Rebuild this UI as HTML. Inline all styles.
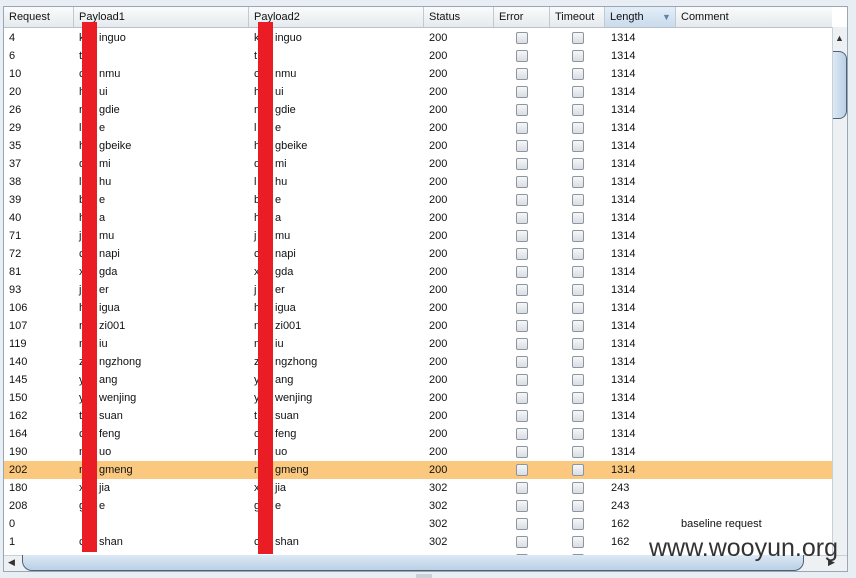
<!DOCTYPE html>
<html><head><style>
body{margin:0;width:856px;height:578px;overflow:hidden;background:#e9eef4;font-family:"Liberation Sans",Arial,sans-serif;font-size:11px;color:#111;position:relative}
.t{position:absolute;left:3px;top:6px;width:845px;height:566px;background:#fff;border:1px solid #9aa6b4;box-sizing:border-box;overflow:hidden}
.hd{position:absolute;left:0;top:0;width:828px;height:20px;background:linear-gradient(#fafbfc,#e6eaee);border-bottom:1px solid #b9c2cc}
.hd div{position:absolute;top:0;height:20px;line-height:20px;padding-left:5px;border-right:1px solid #c2c9d1;box-sizing:border-box}
.r{position:absolute;left:0;width:828px;height:18px;line-height:18px}
.r span{position:absolute;top:0}
.cb{position:absolute;top:3px;width:10px;height:10px;border:1px solid #8d96a0;border-radius:2px;background:linear-gradient(#f6f7f8,#d9dde2)}
.red{position:absolute;background:#ea1c24}
</style></head><body>
<div class="t">
<div class="hd">
<div style="left:0;width:70px">Request</div>
<div style="left:70px;width:175px">Payload1</div>
<div style="left:245px;width:175px">Payload2</div>
<div style="left:420px;width:70px">Status</div>
<div style="left:490px;width:56px">Error</div>
<div style="left:546px;width:55px">Timeout</div>
<div style="left:601px;width:71px;background:linear-gradient(#e4eef8,#c9dbec)">Length<span style="position:absolute;left:57px;color:#5b84ad;font-size:9px">▼</span></div>
<div style="left:672px;width:156px;border-right:none">Comment</div>
</div>
<div id="rows"></div>
<div style="position:absolute;left:828px;top:20px;width:16px;height:532px;background:#eef1f4;border-left:1px solid #c8cfd6"></div>
<div style="position:absolute;left:831px;top:26px;font-size:9px;color:#333">▲</div>
<div style="position:absolute;left:829px;top:44px;width:13px;height:66px;border:1px solid #4f6173;border-left:none;border-radius:0 8px 8px 0;background:linear-gradient(90deg,#dde9f4,#b9d0e6)"></div>
<div style="position:absolute;left:0;top:548px;width:843px;height:17px;background:#eef1f4;border-top:1px solid #c8cfd6"></div>
<div style="position:absolute;left:4px;top:550px;font-size:9px;color:#333">◀</div>
<div style="position:absolute;left:18px;top:548px;width:780px;height:15px;border:1px solid #4f6173;border-top:none;border-radius:0 0 10px 10px;background:linear-gradient(#dde9f4,#b9d0e6)"></div>
<div style="position:absolute;left:824px;top:550px;font-size:9px;color:#333">▶</div>
</div>
<div class="red" style="left:82px;top:22px;width:15px;height:530px"></div>
<div class="red" style="left:258px;top:22px;width:15px;height:532px"></div>
<div style="position:absolute;left:649px;top:534px;font-size:25px;color:#333">www.wooyun.org</div>
<div style="position:absolute;left:416px;top:574px;width:16px;height:4px;background:#c9d0d8"></div>
<script>
var d=[["4","k","inguo"],["6","t",""],["10","c","nmu"],["20","h","ui"],["26","m","gdie"],["29","l","e"],["35","h","gbeike"],["37","d","mi"],["38","l","hu"],["39","b","e"],["40","h","a"],["71","j","mu"],["72","c","napi"],["81","x","gda"],["93","j","er"],["106","h","igua"],["107","m","zi001"],["119","m","iu"],["140","z","ngzhong"],["145","y","ang"],["150","y","wenjing"],["162","t","suan"],["164","c","feng"],["190","m","uo"],["202","m","gmeng"],["180","x","jia","302","243"],["208","g","e","302","243"],["0","","","302","162","baseline request"],["1","c","shan","302","162"],["2","","","302","162"]];
var h="";
d.forEach(function(r,i){
var top=22+i*18;var bg=r[0]=="202"?"background:#fac97f;":"";
h+='<div class="r" style="top:'+top+'px;'+bg+'"><span style="left:5px">'+r[0]+'</span><span style="left:75px">'+r[1]+'</span><span style="left:95px">'+r[2]+'</span><span style="left:250px">'+r[1]+'</span><span style="left:271px">'+r[2]+'</span><span style="left:425px">'+(r[3]||"200")+'</span><div class="cb" style="left:512px"></div><div class="cb" style="left:568px"></div><span style="left:607px">'+(r[4]||"1314")+'</span><span style="left:677px">'+(r[5]||"")+'</span></div>';
});
document.getElementById("rows").innerHTML=h;
</script>
</body></html>
